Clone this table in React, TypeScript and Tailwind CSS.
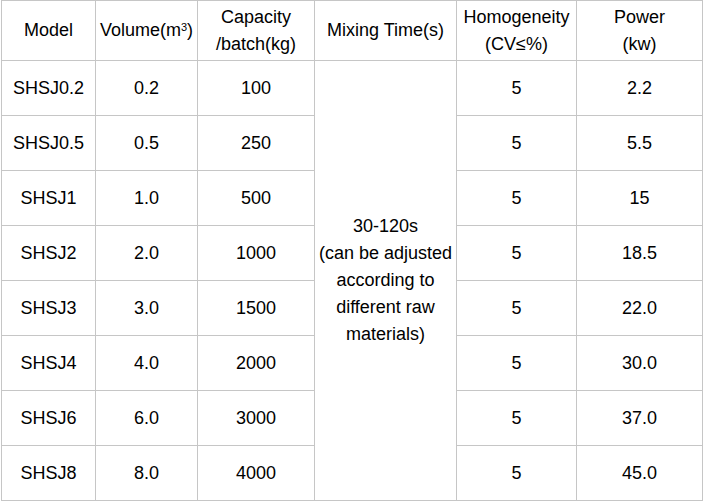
const rows = [
  { model: 'SHSJ0.2', volume: '0.2', capacity: '100', power: '2.2' },
  { model: 'SHSJ0.5', volume: '0.5', capacity: '250', power: '5.5' },
  { model: 'SHSJ1', volume: '1.0', capacity: '500', power: '15' },
  { model: 'SHSJ2', volume: '2.0', capacity: '1000', power: '18.5' },
  { model: 'SHSJ3', volume: '3.0', capacity: '1500', power: '22.0' },
  { model: 'SHSJ4', volume: '4.0', capacity: '2000', power: '30.0' },
  { model: 'SHSJ6', volume: '6.0', capacity: '3000', power: '37.0' },
  { model: 'SHSJ8', volume: '8.0', capacity: '4000', power: '45.0' },
];

const cell = 'border border-[#c6c6c6] p-0 text-center align-middle font-normal';

export default function App() {
  return (
    <div className="min-h-screen bg-white pl-px">
      <table
        className="w-[702px] table-fixed border-collapse text-[18px] leading-[27px] text-black"
        style={{ fontFamily: '"Liberation Sans", Arial, sans-serif' }}
      >
        <colgroup>
          <col className="w-[94px]" />
          <col className="w-[102px]" />
          <col className="w-[117px]" />
          <col className="w-[142px]" />
          <col className="w-[120px]" />
          <col className="w-[126px]" />
        </colgroup>
        <thead>
          <tr className="h-[60px]">
            <th className={cell}>Model</th>
            <th className={cell}>
              Volume(m<sup className="text-[11px]">3</sup>)
            </th>
            <th className={cell}>
              Capacity
              <br />
              /batch(kg)
            </th>
            <th className={cell}>Mixing Time(s)</th>
            <th className={cell}>
              Homogeneity
              <br />
              (CV≤%)
            </th>
            <th className={cell}>
              Power
              <br />
              (kw)
            </th>
          </tr>
        </thead>
        <tbody>
          {rows.map((r, i) => (
            <tr key={r.model} className="h-[55px]">
              <td className={cell}>{r.model}</td>
              <td className={cell}>{r.volume}</td>
              <td className={cell}>{r.capacity}</td>
              {i === 0 && (
                <td className={cell} rowSpan={rows.length}>
                  30-120s
                  <br />
                  (can be adjusted
                  <br />
                  according to
                  <br />
                  different raw
                  <br />
                  materials)
                </td>
              )}
              <td className={cell}>5</td>
              <td className={cell}>{r.power}</td>
            </tr>
          ))}
        </tbody>
      </table>
    </div>
  );
}
